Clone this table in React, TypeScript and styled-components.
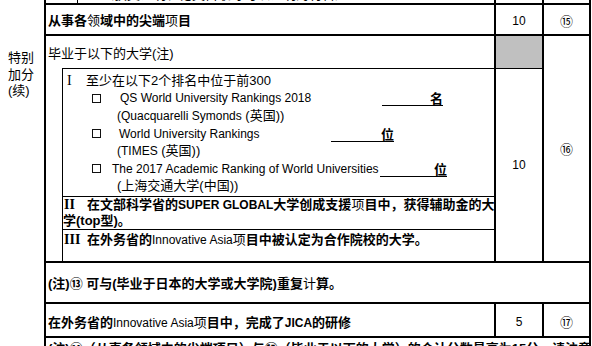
import React from "react";
import styled, { createGlobalStyle } from "styled-components";

const Global = createGlobalStyle`
  body {
    margin: 0;
    background: #fff;
  }
`;

const Page = styled.div`
  width: 592px;
  height: 346px;
  overflow: hidden;
  display: flex;
  background: #fff;
  color: #000;
  font-family: "Liberation Sans", "Noto Sans CJK SC", sans-serif;
  font-size: 13px;
`;

const Side = styled.div`
  width: 44px;
  flex: none;
  padding: 50px 0 0 8px;
  box-sizing: border-box;
  line-height: 16.5px;
`;

const Sheet = styled.div`
  width: 547px;
  flex: none;
  border-left: 2px solid #000;
  border-right: 2px solid #000;
  box-sizing: border-box;
  display: flex;
  flex-direction: column;
`;

const Row = styled.div<{ $h: number; $open?: boolean }>`
  display: flex;
  flex: none;
  height: ${(p) => p.$h}px;
  border-bottom: ${(p) => (p.$open ? "none" : "2px solid #000")};
`;

const Main = styled.div<{ $center?: boolean }>`
  width: 450px;
  flex: none;
  box-sizing: border-box;
  border-right: 2px solid #000;
  display: flex;
  flex-direction: column;
  justify-content: ${(p) => (p.$center ? "center" : "flex-start")};
  padding-left: ${(p) => (p.$center ? "2px" : "0")};
`;

const Cell = styled.div<{ $w: number; $line?: boolean; $pt?: number }>`
  width: ${(p) => p.$w}px;
  flex: none;
  box-sizing: border-box;
  border-right: ${(p) => (p.$line ? "2px solid #000" : "none")};
  display: flex;
  flex-direction: column;
  align-items: center;
  justify-content: center;
  padding-top: ${(p) => p.$pt ?? 0}px;
`;

const Num = styled.span`
  font-size: 12px;
`;

const Mark = styled.span`
  font-size: 13px;
`;

const Gray = styled.div`
  width: 100%;
  height: 33px;
  flex: none;
  background: #c0c0c0;
  border-bottom: 1px solid #000;
  box-sizing: border-box;
`;

const Fill = styled.div`
  flex: 1;
  display: flex;
  align-items: center;
  justify-content: center;
`;

const Strong = styled.span`
  font-weight: 700;
`;

const Thin = styled.span`
  font-weight: 400;
`;

const Lat = styled.span`
  font-size: 12px;
`;

/* rows cut by the edges of the crop */
const Peek = styled.div<{ $shift: number }>`
  overflow: hidden;
  height: 100%;
  display: flex;
  white-space: nowrap;
  line-height: 16px;
  & > div {
    margin-top: ${(p) => p.$shift}px;
  }
`;

const Stub = styled.div`
  width: 31px;
  flex: none;
  border-right: 1px solid #000;
`;

const Head = styled.div`
  height: 32px;
  flex: none;
  display: flex;
  align-items: center;
  padding-left: 2px;
`;

const Nest = styled.div`
  flex: 1;
  padding-left: 16px;
  display: flex;
`;

const Box = styled.div`
  flex: 1;
  border-left: 1px solid #000;
  border-top: 1px solid #000;
  display: flex;
  flex-direction: column;
`;

const Section = styled.div<{ $h?: number; $pt?: number; $last?: boolean; $bold?: boolean }>`
  height: ${(p) => (p.$h ? `${p.$h}px` : "auto")};
  flex: ${(p) => (p.$h ? "none" : "1")};
  box-sizing: content-box;
  padding-top: ${(p) => p.$pt ?? 0}px;
  border-bottom: ${(p) => (p.$last ? "none" : "1px solid #000")};
  font-weight: ${(p) => (p.$bold ? 700 : 400)};
  line-height: 16px;
  white-space: nowrap;
  overflow: hidden;
`;

const Line = styled.div<{ $indent: number }>`
  height: 17.6px;
  display: flex;
  align-items: center;
  padding-left: ${(p) => p.$indent}px;
  white-space: nowrap;
`;

const Roman = styled.span<{ $w: number; $bold?: boolean }>`
  display: inline-block;
  width: ${(p) => p.$w}px;
  font-family: "Liberation Serif", serif;
  font-size: 14px;
  font-weight: ${(p) => (p.$bold ? 700 : 400)};
  padding-left: 1px;
`;

const Check = styled.span`
  width: 9px;
  height: 9px;
  box-sizing: border-box;
  border: 1.3px solid #111;
  flex: none;
`;

const Label = styled.span<{ $gap: number; $w: number }>`
  margin-left: ${(p) => p.$gap}px;
  width: ${(p) => p.$w}px;
  flex: none;
`;

const Blank = styled.span<{ $w: number }>`
  width: ${(p) => p.$w}px;
  flex: none;
  display: flex;
  justify-content: flex-end;
  border-bottom: 1px solid #000;
  line-height: 13px;
  font-weight: 700;
  margin-top: 2px;
`;

const Wide = styled.div`
  flex: 1;
  display: flex;
  align-items: center;
  padding-left: 2px;
  font-weight: 700;
  white-space: nowrap;
`;

export default function App() {
  return (
    <Page>
      <Global />
      <Side>
        特别
        <br />
        加分
        <br />
        (续)
      </Side>
      <Sheet>
        <Row $h={3}>
          <Main>
            <Peek $shift={-13}>
              <Stub />
              <div style={{ paddingLeft: 23 }}>（获奖证明、论文目录等可以证明的材料）</div>
            </Peek>
          </Main>
          <Cell $w={48} $line />
          <Cell $w={45} />
        </Row>

        <Row $h={29}>
          <Main $center>
            <div>
              <Strong>从事各</Strong>
              <Thin>领</Thin>
              <Strong>域中的尖端</Strong>
              <Thin>项</Thin>
              <Strong>目</Strong>
            </div>
          </Main>
          <Cell $w={48} $line $pt={2}>
            <Num>10</Num>
          </Cell>
          <Cell $w={45} $pt={2}>
            <Mark>⑮</Mark>
          </Cell>
        </Row>

        <Row $h={225}>
          <Main>
            <Head>毕业于以下的大学(注)</Head>
            <Nest>
              <Box>
                <Section $h={124} $pt={3}>
                  <Line $indent={3}>
                    <Roman $w={19}>I</Roman>
                    至少在以下2个排名中位于前300
                  </Line>
                  <Line $indent={29}>
                    <Check />
                    <Label $gap={19} $w={262}>
                      <Lat>QS World University Rankings 2018</Lat>
                    </Label>
                    <Blank $w={61}>名</Blank>
                  </Line>
                  <Line $indent={54}>
                    <Lat>(Quacquarelli Symonds</Lat>&nbsp;(英国))
                  </Line>
                  <Line $indent={29}>
                    <Check />
                    <Label $gap={18} $w={212}>
                      <Lat>World University Rankings</Lat>
                    </Label>
                    <Blank $w={63}>位</Blank>
                  </Line>
                  <Line $indent={54}>
                    <Lat>(TIMES</Lat>&nbsp;(英国))
                  </Line>
                  <Line $indent={29}>
                    <Check />
                    <Label $gap={11} $w={268}>
                      <Lat>The 2017 Academic Ranking of World Universities</Lat>
                    </Label>
                    <Blank $w={67}>位</Blank>
                  </Line>
                  <Line $indent={54}>(上海交通大学(中国))</Line>
                </Section>
                <Section $h={32} $bold>
                  <Roman $w={23} $bold>II</Roman>
                  在文部科学省的<Lat>SUPER GLOBAL</Lat>大学创成支援<Thin>项</Thin>目中，获得辅助金的大
                  <br />
                  学(top型)。
                </Section>
                <Section $pt={2} $last>
                  <Roman $w={23} $bold>III</Roman>
                  <Strong>在外务省的</Strong>
                  <Lat>Innovative Asia</Lat>
                  <Thin>项</Thin>
                  <Strong>目中被认定为合作院校的大学。</Strong>
                </Section>
              </Box>
            </Nest>
          </Main>
          <Cell $w={48} $line>
            <Gray />
            <Fill>
              <Num>10</Num>
            </Fill>
          </Cell>
          <Cell $w={45}>
            <Mark>⑯</Mark>
          </Cell>
        </Row>

        <Row $h={39}>
          <Wide>
            (注)⑬ 可与(毕业于日本的大学或大学院)重复<Thin>计</Thin>算。
          </Wide>
        </Row>

        <Row $h={32}>
          <Main $center>
            <div style={{ paddingTop: 3 }}>
              <Strong>在外务省的</Strong>
              <Lat>Innovative Asia</Lat>
              <Thin>项</Thin>
              <Strong>目中，完成了</Strong>
              <Strong>
                <Lat>JICA</Lat>的研修
              </Strong>
            </div>
          </Main>
          <Cell $w={48} $line $pt={3}>
            <Num>5</Num>
          </Cell>
          <Cell $w={45} $pt={3}>
            <Mark>⑰</Mark>
          </Cell>
        </Row>

        <Row $h={8} $open>
          <Peek $shift={3}>
            <div style={{ paddingLeft: 2, fontWeight: 700 }}>
              (注)⑭（从事各领域中的尖端项目）与⑮（毕业于以下的大学）的合计分数最高为15分，请注意分数上限。
            </div>
          </Peek>
        </Row>
      </Sheet>
    </Page>
  );
}
